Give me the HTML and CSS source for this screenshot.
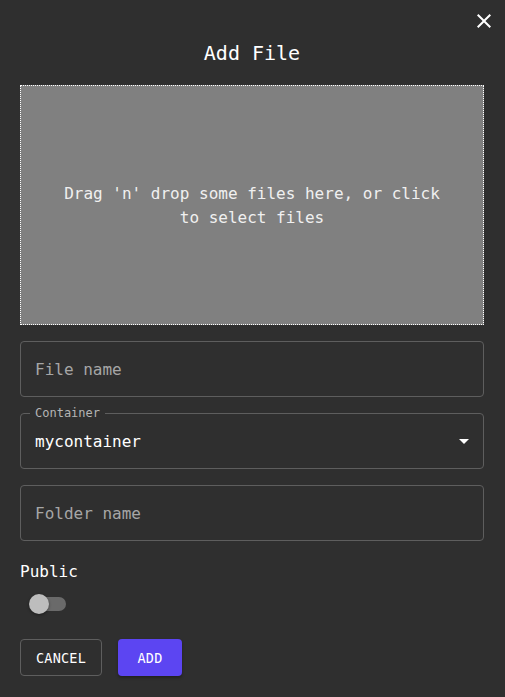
FILE: index.html
```html
<!DOCTYPE html>
<html lang="en">
<head>
<meta charset="utf-8">
<title>Add File</title>
<link rel="stylesheet" href="styles.css">
</head>
<body>
<div class="dialog">
  <button class="close" aria-label="Close">
    <svg width="24" height="24" viewBox="0 0 24 24"><path d="M19 6.41 17.59 5 12 10.59 6.41 5 5 6.41 10.59 12 5 17.59 6.41 19 12 13.41 17.59 19 19 17.59 13.41 12z" fill="#ffffff"/></svg>
  </button>
  <header class="header"><h1 class="title">Add File</h1></header>
  <div class="dropzone"><p class="dropzone-text">Drag 'n' drop some files here, or click to select files</p></div>
  <div class="field"><span class="placeholder">File name</span></div>
  <div class="field select">
    <span class="legend">Container</span>
    <span class="value">mycontainer</span>
    <svg class="arrow" width="24" height="24" viewBox="0 0 24 24"><path d="M7 10l5 5 5-5z" fill="#ffffff"/></svg>
  </div>
  <div class="field"><span class="placeholder">Folder name</span></div>
  <div class="public">Public</div>
  <div class="switch"><span class="track"></span><span class="thumb"></span></div>
  <div class="actions">
    <button class="btn btn-cancel">CANCEL</button>
    <button class="btn btn-add">ADD</button>
  </div>
</div>
</body>
</html>
```
FILE: styles.css
```css
html, body {
  margin: 0;
  padding: 0;
  background: #2f2f2f;
}
body {
  font-family: "DejaVu Sans Mono", "Liberation Mono", monospace;
  color: #ffffff;
}
.dialog {
  position: relative;
  width: 505px;
  height: 697px;
  box-sizing: border-box;
  padding: 0 21px 0 20px;
  display: flex;
  flex-direction: column;
}
.close {
  position: absolute;
  top: 9px;
  right: 9px;
  width: 24px;
  height: 24px;
  padding: 0;
  border: 0;
  background: transparent;
  display: flex;
}
.header {
  padding-top: 41px;
  height: 24px;
  padding-bottom: 20px;
  display: flex;
  justify-content: center;
}
.title {
  margin: 0;
  font-size: 20px;
  line-height: 24px;
  font-weight: normal;
  letter-spacing: 0;
}
.dropzone {
  height: 240px;
  box-sizing: border-box;
  border: 1px dotted #ffffff;
  background: #808080;
  display: flex;
  align-items: center;
  justify-content: center;
  padding: 2px 40px 0;
}
.dropzone-text {
  margin: 0;
  font-size: 16px;
  line-height: 24px;
  text-align: center;
  color: #f0f0f0;
}
.field {
  position: relative;
  margin-top: 16px;
  height: 56px;
  box-sizing: border-box;
  border: 1px solid #5e5e5e;
  border-radius: 4px;
  display: flex;
  align-items: center;
  padding: 0 14px;
  font-size: 16px;
}
.placeholder {
  color: #a6a6a6;
}
.value {
  color: #ffffff;
}
.legend {
  position: absolute;
  top: -9px;
  left: 9px;
  padding: 0 5px;
  background: #2f2f2f;
  font-size: 12px;
  line-height: 16px;
  color: #b4b4b4;
}
.arrow {
  position: absolute;
  right: 7px;
  top: 15px;
}
.public {
  margin-top: 19px;
  font-size: 16px;
  line-height: 24px;
}
.switch {
  position: relative;
  margin-top: 1px;
  width: 58px;
  height: 38px;
}
.track {
  position: absolute;
  left: 12px;
  top: 12px;
  width: 34px;
  height: 14px;
  border-radius: 7px;
  background: #6a6a6a;
}
.thumb {
  position: absolute;
  left: 9px;
  top: 9px;
  width: 20px;
  height: 20px;
  border-radius: 50%;
  background: #bdbdbd;
  box-shadow: 0 1px 3px rgba(0,0,0,0.4);
}
.actions {
  margin-top: 16px;
  display: flex;
  gap: 16px;
}
.btn {
  height: 37px;
  box-sizing: border-box;
  border-radius: 4px;
  font-family: "DejaVu Sans Mono", "Liberation Mono", monospace;
  font-size: 13.5px;
  color: #ffffff;
  padding: 0;
  letter-spacing: 0.2px;
}
.btn-cancel {
  width: 82px;
  background: transparent;
  border: 1px solid #5e5e5e;
}
.btn-add {
  width: 64px;
  background: #5c45f2;
  border: 0;
  box-shadow: 0 2px 3px rgba(0,0,0,0.3);
}
```
